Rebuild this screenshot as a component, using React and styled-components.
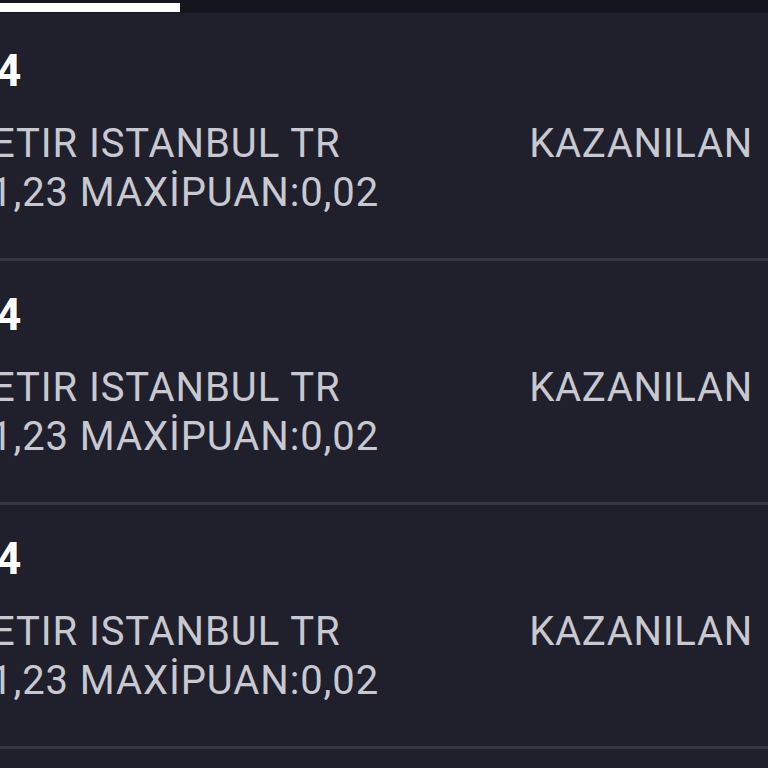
import React from 'react';
import styled, { createGlobalStyle } from 'styled-components';

const GlobalStyle = createGlobalStyle`
  html, body {
    margin: 0;
    padding: 0;
    background: #1f202b;
    overflow: hidden;
  }
  body {
    font-family: Roboto, "Noto Sans", "Liberation Sans", sans-serif;
  }
`;

const Screen = styled.div`
  width: 768px;
  height: 768px;
  background: #1f202b;
  overflow: hidden;
`;

const TabStrip = styled.div`
  height: 13px;
  background: #15151e;
  display: flex;
  align-items: flex-end;
`;

const Indicator = styled.div`
  width: 180px;
  height: 9px;
  margin-bottom: 1px;
  background: #ffffff;
`;

const List = styled.div`
  padding-top: 4px;
`;

const Row = styled.div`
  height: 244px;
  box-sizing: border-box;
  padding: 28px 15px 0 0;
  border-bottom: 3px solid #363745;
  display: flex;
  flex-direction: column;
  overflow: hidden;
`;

const Title = styled.div`
  font-size: 44px;
  line-height: 52px;
  font-weight: 700;
  color: #ffffff;
  margin-left: ${(p) => p.$shift}px;
  white-space: nowrap;
`;

const Body = styled.div`
  margin-top: 22px;
  display: flex;
  justify-content: space-between;
  align-items: flex-start;
`;

const Lines = styled.div`
  display: flex;
  flex-direction: column;
  min-width: 0;
`;

const Line = styled.div`
  font-size: 40px;
  line-height: 49px;
  letter-spacing: 0.9px;
  color: #c8c8d0;
  white-space: nowrap;
  margin-left: ${(p) => p.$shift}px;
`;

const Status = styled.div`
  font-size: 40px;
  line-height: 49px;
  letter-spacing: 0.7px;
  color: #c8c8d0;
  white-space: nowrap;
`;

const items = [
  { id: 1, date: '4', place: 'ETIR ISTANBUL TR', points: '1,23 MAXİPUAN:0,02', status: 'KAZANILAN' },
  { id: 2, date: '4', place: 'ETIR ISTANBUL TR', points: '1,23 MAXİPUAN:0,02', status: 'KAZANILAN' },
  { id: 3, date: '4', place: 'ETIR ISTANBUL TR', points: '1,23 MAXİPUAN:0,02', status: 'KAZANILAN' },
  { id: 4, date: '4', place: 'ETIR ISTANBUL TR', points: '1,23 MAXİPUAN:0,02', status: 'KAZANILAN' },
];

export default function App() {
  return (
    <Screen>
      <GlobalStyle />
      <TabStrip>
        <Indicator />
      </TabStrip>
      <List>
        {items.map((item) => (
          <Row key={item.id}>
            <Title $shift={-4}>{item.date}</Title>
            <Body>
              <Lines>
                <Line $shift={-8}>{item.place}</Line>
                <Line $shift={-10}>{item.points}</Line>
              </Lines>
              <Status>{item.status}</Status>
            </Body>
          </Row>
        ))}
      </List>
    </Screen>
  );
}
